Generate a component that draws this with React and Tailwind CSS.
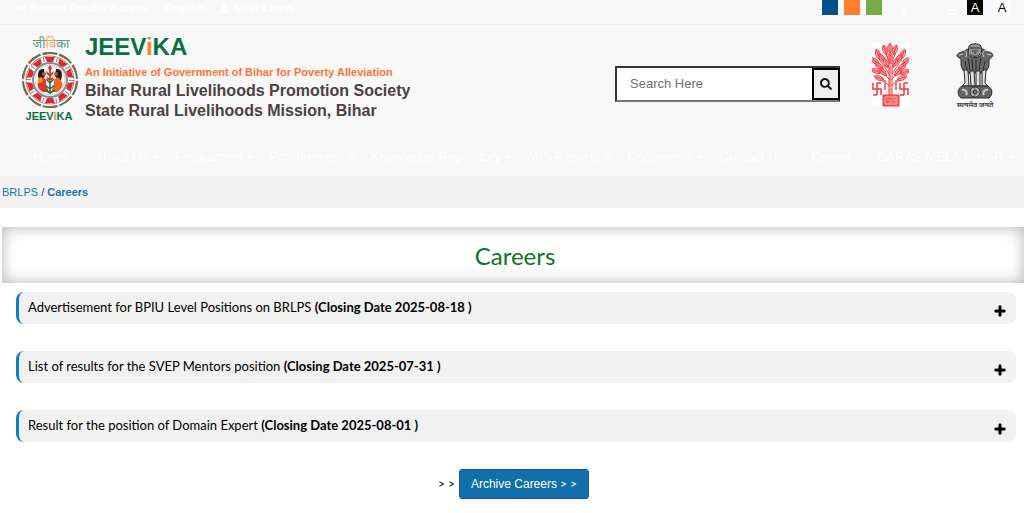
import React from 'react';
import { FaPlus, FaSearch, FaUser, FaVolumeUp } from 'react-icons/fa';

const navItems = [
  { label: 'Home' },
  { label: 'About Us', menu: true },
  { label: 'Programms', menu: true },
  { label: 'Procurement', menu: true },
  { label: 'Knowledge Repository', menu: true },
  { label: 'MIS Reports', menu: true },
  { label: 'Documents', menu: true },
  { label: 'Contact Us' },
  { label: 'Career' },
  { label: 'SARAS MELA BIHAR', menu: true },
];

const themes = [
  { name: 'Blue theme', color: 'bg-[#054f8f]' },
  { name: 'Orange theme', color: 'bg-[#ff7f2f]' },
  { name: 'Green theme', color: 'bg-[#76ab48]' },
];

const careers = [
  { title: 'Advertisement for BPIU Level Positions on BRLPS', closing: '2025-08-18' },
  { title: 'List of results for the SVEP Mentors position', closing: '2025-07-31' },
  { title: 'Result for the position of Domain Expert', closing: '2025-08-01' },
];

const spokes = [0, 36, 72, 108, 144, 180, 216, 252, 288, 324];

function JeevikaLogo() {
  return (
    <svg viewBox="0 -8 60 96" className="w-[60px] h-[96px] shrink-0" role="img" aria-label="Jeevika logo">
      <text x="31" y="12" textAnchor="middle" fontSize="13" fill="#5b9c80" fontFamily="'Noto Sans', 'Noto Sans Devanagari', sans-serif">
        जी<tspan fill="#ff9a5c">वि</tspan>का
      </text>
      <g transform="translate(30 44)">
        <circle r="27" fill="#fff" stroke="#3f7a5c" strokeWidth="2" />
        <circle r="27" fill="none" stroke="#a8583c" strokeWidth="2" strokeDasharray="8.48 8.48" />
        <circle r="24" fill="none" stroke="#8a837d" strokeWidth="1" />
        {spokes.map((angle) => (
          <g key={angle} transform={`rotate(${angle})`}>
            <path d="M-5 -23 L5 -23 L3 -18 L-3 -18 Z" fill="#e3262e" />
            <path d="M-2 -19 L2 -19 L0 -16 Z" fill="#e3262e" />
            <path d="M7 -22 L9 -28" stroke="#f4f1ee" strokeWidth="2" />
            <path d="M6 -18 L8 -23" stroke="#7a8580" strokeWidth="1" />
          </g>
        ))}
        <circle r="17" fill="#fff" stroke="#8b8b92" strokeWidth="2" />
        <circle r="15" fill="#fbf5ee" stroke="#d2d0d1" strokeWidth="1" />
        <path d="M-6 -11 C-12 -12 -13 -6 -11 0 L-8 0 L-5 -4 Z" fill="#1f1c1c" />
        <path d="M6 -11 C12 -12 13 -6 11 0 L8 0 L5 -4 Z" fill="#1f1c1c" />
        <circle cx="-6" cy="-6" r="2" fill="#b95231" />
        <circle cx="6" cy="-6" r="2" fill="#b95231" />
        <path d="M-10 -1 C-6 -5 -3 0 -4 5 L-1 12 L-7 12 C-14 8 -13 3 -10 -1 Z" fill="#e43329" />
        <path d="M10 -1 C6 -5 3 0 4 5 L1 12 L7 12 C14 8 13 3 10 -1 Z" fill="#f0642a" />
        <path d="M-12 -2 L-8 -3 L-7 2 L-12 3 Z" fill="#f28a2e" />
        <path d="M0 14 V-10 M0 3 L-4 -1 M0 3 L4 -1 M0 9 L-5 5 M0 9 L5 5 M0 13 L-5 10 M0 13 L5 10" fill="none" stroke="#19743f" strokeWidth="1.500" />
        <path d="M0 -15 L2 -12 L0 -9 L-2 -12 Z M-4 -9 L0 -6 L4 -9 L3 -6 L0 -3 L-3 -6 Z M-4 -4 L0 -1 L4 -4 L2 0 L-2 0 Z" fill="#e3262e" />
      </g>
      <text x="29" y="84" textAnchor="middle" fontSize="11" fontWeight="700" fill="#0a7042" fontFamily="'Liberation Sans', Arial, sans-serif">
        JEEV<tspan fill="#ff7f2f">i</tspan>KA
      </text>
    </svg>
  );
}

const leaves = [
  [18, 5, 0], [13, 7, -20], [23, 7, 20], [18, 14, 0], [6, 11, -20], [31, 11, 25],
  [10, 15, -35], [27, 15, 35], [3, 18, -50], [34, 18, 50], [14, 20, -25], [23, 20, 28],
  [7, 23, -55], [30, 24, 55], [4, 28, -70], [33, 29, 70], [11, 29, -45], [26, 29, 45],
  [7, 35, -70], [30, 35, 70],
];

function BiharEmblem() {
  return (
    <svg viewBox="0 0 37 64" className="w-[37px] h-[64px] bg-white" role="img" aria-label="Government of Bihar">
      <g fill="none" stroke="#f8383d" strokeWidth="1">
        <path d="M18 52 V8 M17 52 V24 M20 52 V24" />
        <path d="M18 43 C12 38 8 37 5 35 M18 37 C13 31 8 29 4 27 M17 31 C13 24 8 19 6 13 M18 21 L13 9 M19 43 C25 38 29 37 32 35 M19 37 C24 31 29 29 33 27 M20 31 C24 24 29 19 31 13 M19 21 L24 9" />
        {leaves.map(([x, y, angle]) => (
          <path
            key={`${x}-${y}`}
            transform={`translate(${x} ${y}) rotate(${angle})`}
            d="M0 -5 C3 -2 3 2 0 5 C-3 2 -3 -2 0 -5 Z M0 -3 V4"
            fill="#fca3a5"
          />
        ))}
        <path d="M13 37 V47 M24 37 V47" strokeWidth="2" stroke="#fb7478" />
        {/* square key motifs on both sides of the pedestal */}
        <path d="M1 40 V46 H9 V52 M5 40 H9 M5 40 V52 M1 52 H5" strokeWidth="1.500" />
        <path d="M28 40 V46 H36 V52 M32 40 H36 M32 40 V52 M28 52 H32" strokeWidth="1.500" />
        <rect x="11" y="52" width="16" height="11" fill="#fa5054" />
        <path d="M13 54 H25 V61 H13 Z M15 57 H18 V60 M20 60 V56 H23 V60" stroke="#fdb6b8" />
      </g>
    </svg>
  );
}

function IndiaEmblem() {
  return (
    <svg viewBox="0 0 38 68" className="w-[38px] h-[68px]" role="img" aria-label="Government of India">
      <g stroke="#2b2b2b" strokeWidth="1">
        <path d="M6 9 C1 10 0 13 2 14 L5 16 L5 22 C6 28 10 31 14 30 L24 30 C29 31 32 27 33 22 L33 16 L36 14 C38 12 36 9 32 9 L27 6 L12 6 Z" fill="#686868" />
        <path d="M13 3 C15 0 23 0 25 3 L26 11 C24 16 14 16 12 11 Z" fill="#959595" />
        <path d="M14 5 H24 M14 11 C17 14 21 14 24 11 M16 8 H18 M20 8 H22 M19 7 V11" fill="none" />
        <path d="M3 12 L7 11 M5 8 C9 6 12 9 10 14 M31 8 C28 6 25 10 28 14 M31 11 L35 12" fill="none" stroke="#d0d0d0" />
        <path d="M12 15 L14 27 M16 16 L17 29 M20 16 L20 29 M25 15 L23 27 M9 18 L11 27 M29 18 L27 27" fill="none" stroke="#292929" />
        <path d="M8 26 L9 40 L6 43 H13 L12 28 Z M14 28 L15 43 H19 L18 28 Z M20 28 L20 43 H24 L24 28 Z M26 28 L26 43 H32 L29 40 L30 26 Z" fill="#dedede" />
        <path d="M6 43 H32 C37 46 37 52 33 55 H5 C1 52 1 46 6 43 Z" fill="#656565" />
        <circle cx="19" cy="49" r="5" fill="#b5b5b5" />
        <circle cx="19" cy="49" r="2" fill="#777" />
        <path d="M19 44 V47 M19 51 V54 M14 49 H17 M21 49 H24" fill="none" stroke="#666" />
        <path d="M6 47 C9 46 12 49 10 52 M32 47 C29 46 26 49 28 52" fill="none" stroke="#c8c8c8" strokeWidth="2" />
      </g>
      <text x="19" y="64" textAnchor="middle" fontSize="7" fontWeight="700" fill="#444" fontFamily="'Noto Sans', 'Noto Sans Devanagari', sans-serif">
        सत्यमेव जयते
      </text>
    </svg>
  );
}

function TopBar() {
  return (
    <div className="flex h-[25px] items-start justify-between border-b border-[#ececec] pl-4 pr-[13px] text-[11px] font-bold leading-4 text-white">
      <div className="flex items-center">
        <a href="#main" className="flex items-center gap-1">
          <FaVolumeUp className="h-[10px] w-[10px]" />
          Screen Reader Access
        </a>
        <a href="#english" className="ml-4">English</a>
        <a href="#login" className="ml-4 flex items-center gap-[6px]">
          <FaUser className="h-[9px] w-[9px]" />
          User Login
        </a>
      </div>
      <div className="flex items-start">
        <div className="flex gap-[6px]">
          {themes.map((theme) => (
            <button key={theme.name} type="button" aria-label={theme.name} className={`h-[15px] w-4 ${theme.color}`} />
          ))}
        </div>
        <div className="ml-4 flex gap-3 pt-1 text-base leading-[18px]">
          <button type="button" className="w-3">+</button>
          <button type="button" className="w-3">-</button>
          <button type="button" className="w-3">=</button>
        </div>
        <div className="ml-[9px] flex gap-[10px] text-[13px] leading-[15px] font-medium">
          <button type="button" className="h-[15px] w-4 bg-black text-white">A</button>
          <button type="button" className="h-[15px] w-[18px] bg-white text-black">A</button>
        </div>
      </div>
    </div>
  );
}

function Header() {
  return (
    <header className="bg-[#f8f8f8]">
      <TopBar />
      <div className="flex items-start justify-between pl-5 pr-[30px]">
        <div className="flex gap-[5px] pt-[3px]">
          <JeevikaLogo />
          <div className="pt-[7px]">
            <div className="h-7 text-2xl font-bold leading-6 text-[#0a7042]">
              JEEV<span className="text-[#ff7f2f]">i</span>KA
            </div>
            <p className="pt-px text-[11px] font-bold leading-4 text-[#ff7433]">
              An Initiative of Government of Bihar for Poverty Alleviation
            </p>
            <h1 className="pt-px text-base font-bold leading-5 text-[#4b4144]">
              Bihar Rural Livelihoods Promotion Society
              <br />
              State Rural Livelihoods Mission, Bihar
            </h1>
          </div>
        </div>
        <div className="flex items-start">
          <form className="mt-[41px] mr-8 flex h-9 w-[225px] border-2 border-[#33373a] border-b-[#77797b] bg-white" onSubmit={(e) => e.preventDefault()}>
            <input
              type="text"
              aria-label="Search"
              placeholder="Search Here"
              className="min-w-0 flex-1 px-[13px] text-[13px] text-gray-700 outline-none placeholder:text-[#707070]"
            />
            <button type="submit" aria-label="Submit search" className="-mr-0.5 flex w-7 items-center justify-center border-2 border-black bg-[#eeeeee] text-[#111]">
              <FaSearch className="h-3 w-3" />
            </button>
          </form>
          <div className="flex items-start gap-[47px] pt-[18px]">
            <BiharEmblem />
            <IndiaEmblem />
          </div>
        </div>
      </div>
      <nav className="mt-[14px] pl-[33px]">
        <ul className="flex h-[38px] items-center whitespace-nowrap text-[13px] text-white">
          {navItems.map((item) => (
            <li key={item.label}>
              <a href="#nav" className="flex items-center">
                {item.label}
                {item.menu ? (
                  <span className="ml-[5px] mr-4 border-x-[3px] border-t-[3px] border-x-transparent border-t-white" />
                ) : (
                  <span className="w-[27px]" />
                )}
              </a>
            </li>
          ))}
        </ul>
      </nav>
    </header>
  );
}

export default function App() {
  return (
    <div className="min-h-screen overflow-x-hidden bg-white font-['Liberation_Sans',Arial,sans-serif]">
      <Header />

      <div className="h-8 bg-[#f2f2f2] px-0.5 text-[11px] leading-8 text-[#333]">
        <a href="#home" className="text-[#1c74b0]">BRLPS</a> /{' '}
        <a href="#careers" className="font-bold text-[#1c74b0]">Careers</a>
      </div>

      <main id="main" className="pt-[19px]">
        <h2 className="ml-0.5 pt-[13px] pb-[11px] pl-1 text-center font-[Lato,sans-serif] text-2xl leading-8 text-[#08761c] shadow-[inset_0_0_15px_#b4b4b4]">
          Careers
        </h2>

        <div className="mt-[9px] flex flex-col gap-[27px] pl-4 pr-2">
          {careers.map((career) => (
            <button
              key={career.title}
              type="button"
              className="flex h-8 items-center justify-between rounded-lg border-l-[3px] border-[#0d80bd] bg-[#f1f1f1] pl-[9px] pr-[10px] text-left font-[Lato,sans-serif] text-[13px] text-black"
            >
              <span>
                {career.title} <strong>(Closing Date {career.closing} )</strong>
              </span>
              <FaPlus className="mt-[6px] h-3 w-3 stroke-black stroke-[30px]" />
            </button>
          ))}
        </div>

        <div className="mt-[27px] flex items-center justify-center gap-1 pl-[3px] font-[Lato,sans-serif] text-xs text-black">
          <span>&gt; &gt;</span>
          <a href="#archive" className="rounded-[3px] border border-[#0d5f9b] bg-[#126fac] px-[11px] py-[5px] leading-[18px] text-white">
            <span className="font-['Liberation_Sans',Arial,sans-serif]">Archive Careers</span> &gt; &gt;
          </a>
        </div>
      </main>
    </div>
  );
}
